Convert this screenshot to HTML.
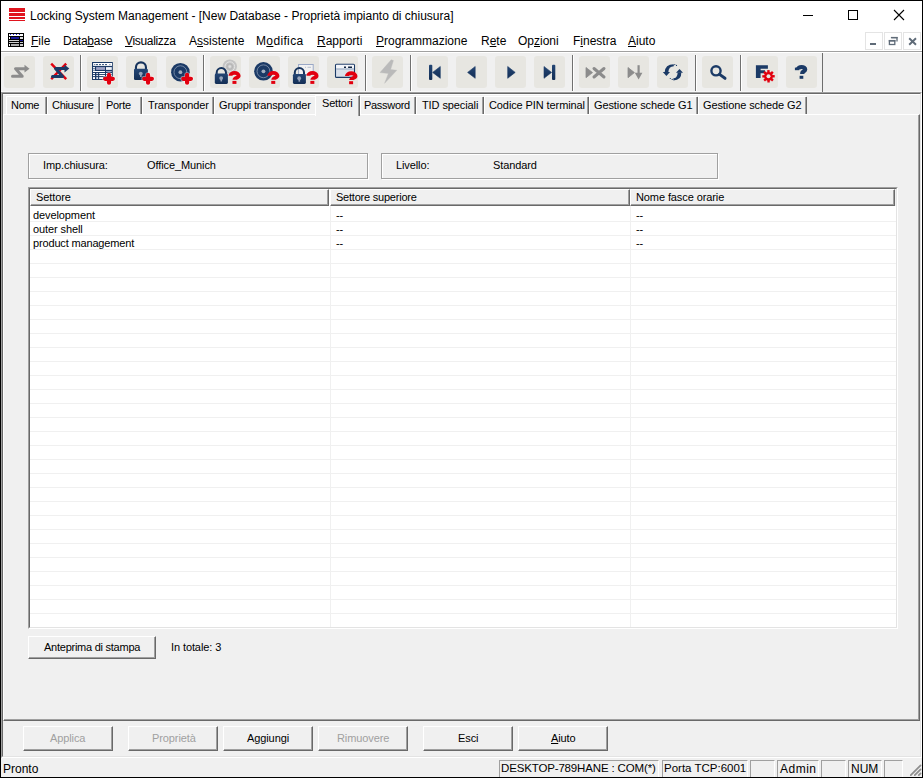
<!DOCTYPE html>
<html><head><meta charset="utf-8">
<style>
*{box-sizing:border-box}
html,body{margin:0;padding:0}
body{width:923px;height:778px;overflow:hidden;background:#f0f0f0;position:relative;font-family:"Liberation Sans",sans-serif;color:#000}
.a{position:absolute}
.tx{position:absolute;white-space:nowrap;line-height:1}
.f12{font-size:12px}
.ms{font-size:11px;letter-spacing:-0.1px}
.u{text-decoration:underline;text-underline-offset:1px}
.tb{position:absolute;top:56px;width:31px;height:32px;background:#e7e6e1;border-radius:3px}
.sep{position:absolute;top:55px;width:2px;height:36px;border-left:1px solid #707070;border-right:1px solid #fff}
.tab{position:absolute;top:96px;height:19px;border-left:1px solid #fff;border-top:1px solid #fff}
.tabr{position:absolute;top:97px;width:2px;height:17px;border-left:1px solid #a0a0a0;border-right:1px solid #696969}
.gb{position:absolute;border:1px solid #a0a0a0;box-shadow:inset 1px 1px 0 #fff,1px 1px 0 #fff}
.btn{position:absolute;background:#f0f0f0;border-top:1px solid #fff;border-left:1px solid #fff;border-right:1px solid #696969;border-bottom:1px solid #696969;box-shadow:inset -1px -1px 0 #a0a0a0}
.dis{color:#a0a0a0}
.pane{position:absolute;top:760px;height:17px;border-top:1px solid #a0a0a0;border-left:1px solid #a0a0a0;border-right:1px solid #fff}
</style></head><body>
<!-- window border -->
<div class="a" style="left:0;top:0;width:923px;height:778px;border:1px solid #000;"></div>
<!-- title bar -->
<div class="a" style="left:1px;top:1px;width:921px;height:50px;background:#fff"></div>
<!-- logo -->
<div class="a" style="left:9px;top:8px;width:16px;height:4px;background:#e0141e"></div>
<div class="a" style="left:9px;top:13px;width:16px;height:3px;background:#e0141e"></div>
<div class="a" style="left:9px;top:17px;width:16px;height:2px;background:#e0141e"></div>
<div class="a" style="left:9px;top:20px;width:16px;height:1px;background:#e0141e"></div>
<div class="tx f12" style="left:30px;top:10px">Locking System Management - [New Database - Proprietà impianto di chiusura]</div>
<!-- window controls -->
<div class="a" style="left:803px;top:15px;width:10px;height:1px;background:#000"></div>
<div class="a" style="left:848px;top:10px;width:10px;height:10px;border:1px solid #000"></div>
<svg class="a" style="left:893px;top:9px" width="12" height="12" viewBox="0 0 12 12"><path d="M1 1L11 11M11 1L1 11" stroke="#000" stroke-width="1.1"/></svg>

<!-- menu bar -->
<div id="menu">
<svg class="a" style="left:8px;top:33px" width="16" height="14" viewBox="0 0 16 14"><rect x="0" y="0" width="16" height="14" fill="#000"/><rect x="1" y="1" width="14" height="2" fill="#fff"/><rect x="2" y="1" width="1" height="1" fill="#22c"/><rect x="5" y="1" width="1" height="1" fill="#22c"/><rect x="8" y="1" width="1" height="1" fill="#22c"/><rect x="11" y="1" width="1" height="1" fill="#22c"/><rect x="1" y="4" width="1" height="2" fill="#fff"/><rect x="3" y="4" width="8" height="2" fill="#1a1a9a"/><rect x="12" y="4" width="3" height="2" fill="#ddd"/><rect x="1" y="7" width="10" height="1" fill="#ccc"/><rect x="12" y="7" width="3" height="1" fill="#1a1a9a"/><rect x="1" y="9" width="10" height="1" fill="#ccc"/><rect x="12" y="9" width="3" height="1" fill="#ccc"/><rect x="1" y="11" width="1" height="2" fill="#fff"/><rect x="3" y="11" width="8" height="2" fill="#aaa"/><rect x="12" y="11" width="3" height="2" fill="#ccc"/></svg>
<div class="tx f12" style="left:31px;top:35px"><span class="u">F</span>ile</div>
<div class="tx f12" style="left:63px;top:35px;letter-spacing:-0.25px">Data<span class="u">b</span>ase</div>
<div class="tx f12" style="left:125px;top:35px;letter-spacing:-0.33px"><span class="u">V</span>isualizza</div>
<div class="tx f12" style="left:189px;top:35px">A<span class="u">s</span>sistente</div>
<div class="tx f12" style="left:256px;top:35px;letter-spacing:0.35px">M<span class="u">o</span>difica</div>
<div class="tx f12" style="left:317px;top:35px"><span class="u">R</span>apporti</div>
<div class="tx f12" style="left:376px;top:35px"><span class="u">P</span>rogrammazione</div>
<div class="tx f12" style="left:481px;top:35px">R<span class="u">e</span>te</div>
<div class="tx f12" style="left:518px;top:35px">Op<span class="u">z</span>ioni</div>
<div class="tx f12" style="left:573px;top:35px">F<span class="u">i</span>nestra</div>
<div class="tx f12" style="left:628px;top:35px"><span class="u">A</span>iuto</div>
<!-- mdi buttons -->
<div class="a" style="left:865px;top:32px;width:18px;height:18px;border:1px solid #e4e4e4"></div>
<div class="a" style="left:884px;top:32px;width:18px;height:18px;border:1px solid #e4e4e4"></div>
<div class="a" style="left:903px;top:32px;width:18px;height:18px;border:1px solid #e4e4e4"></div>
<div class="a" style="left:870px;top:43px;width:6px;height:2px;background:#5f6b78"></div>
<svg class="a" style="left:886px;top:35px" width="14" height="12" viewBox="0 0 14 12"><path d="M5.5 2.7H11V6.5" fill="none" stroke="#5f6b78" stroke-width="1.3"/><rect x="3.4" y="5.6" width="5.4" height="3.9" fill="none" stroke="#5f6b78" stroke-width="1.3"/><rect x="2.8" y="5" width="6.6" height="1.6" fill="#5f6b78"/><rect x="4.9" y="1.9" width="6.7" height="1.4" fill="#5f6b78"/></svg>
<svg class="a" style="left:907px;top:36px" width="11" height="11" viewBox="0 0 11 11"><path d="M2.2 2.2L9 8.8M9 2.2L2.2 8.8" stroke="#5f6b78" stroke-width="1.9"/></svg>
</div>
<div class="a" style="left:1px;top:51px;width:921px;height:1px;background:#a0a0a0"></div>

<!-- toolbar -->
<div class="a" style="left:1px;top:52px;width:921px;height:40px;background:#f0f0f0;border-top:1px solid #fff;border-bottom:1px solid #f8f8f8"></div>
<div id="toolbar">
<div class="tb" style="left:4px"></div>
<div class="tb" style="left:43px"></div>
<div class="sep" style="left:80px"></div>
<div class="tb" style="left:87px"></div>
<div class="tb" style="left:126px"></div>
<div class="tb" style="left:166px"></div>
<div class="sep" style="left:203px"></div>
<div class="tb" style="left:210px"></div>
<div class="tb" style="left:249px"></div>
<div class="tb" style="left:288px"></div>
<div class="tb" style="left:327px"></div>
<div class="sep" style="left:365px"></div>
<div class="tb" style="left:372px"></div>
<div class="sep" style="left:410px"></div>
<div class="tb" style="left:417px"></div>
<div class="tb" style="left:456px"></div>
<div class="tb" style="left:495px"></div>
<div class="tb" style="left:534px"></div>
<div class="sep" style="left:572px"></div>
<div class="tb" style="left:579px"></div>
<div class="tb" style="left:618px"></div>
<div class="tb" style="left:657px"></div>
<div class="sep" style="left:695px"></div>
<div class="tb" style="left:702px"></div>
<div class="sep" style="left:740px"></div>
<div class="tb" style="left:747px"></div>
<div class="tb" style="left:786px"></div>
<div class="a" style="left:822px;top:53px;width:1px;height:39px;background:#6d6d6d"></div>
<svg class="a" style="left:0;top:0" width="923" height="95" viewBox="0 0 923 95">
<defs><linearGradient id="nv" x1="0" y1="0" x2="0" y2="1"><stop offset="0" stop-color="#244674"/><stop offset="1" stop-color="#132e55"/></linearGradient></defs>
<path d="M12.5 76.2H22.2L15.6 68.7H25" fill="none" stroke="#8c8c8c" stroke-width="3" stroke-linecap="round" stroke-linejoin="round"/>
<path d="M24.5 64.8L29.5 68.7L24.5 72.6Z" fill="#8c8c8c"/>
<path d="M51.2 63.6L66.2 79.2M66.2 63.6L51.2 79.2" stroke="#e2000f" stroke-width="2.4"/>
<path d="M52.5 76.5H62.5L55.5 68.6H65" fill="none" stroke="#1b3a66" stroke-width="3" stroke-linecap="round" stroke-linejoin="round"/>
<path d="M64.5 64.8L69.3 68.6L64.5 72.4Z" fill="#1b3a66"/>
<rect x="92" y="62" width="20.8" height="18" fill="#1b3a66"/><rect x="93.1" y="63" width="18.9" height="2.9" fill="#ffffff"/><rect x="93" y="67.1" width="2" height="1.3" fill="#ffffff"/><rect x="93" y="69.2" width="2" height="1.3" fill="#ffffff"/><rect x="96.1" y="67.1" width="8.9" height="2.8" fill="#9ea2c4"/><rect x="106" y="67.1" width="5.8" height="2.8" fill="#eef0f6"/><rect x="93" y="71" width="12" height="1" fill="#ffffff"/><rect x="106" y="71" width="5.8" height="1" fill="#9ea2c4"/><rect x="93" y="73" width="2" height="1.1" fill="#ffffff"/><rect x="96.3" y="73" width="1.8" height="1.1" fill="#dde2ec"/><rect x="99.2" y="73" width="5.8" height="1.1" fill="#ffffff"/><rect x="106" y="73" width="5.8" height="1.1" fill="#ffffff"/><rect x="93" y="75" width="2" height="1.1" fill="#ffffff"/><rect x="96.3" y="75" width="1.8" height="1.1" fill="#dde2ec"/><rect x="99.2" y="75" width="5.8" height="1.1" fill="#ffffff"/><rect x="106" y="75" width="5.8" height="1.1" fill="#ffffff"/><rect x="93" y="77.1" width="2" height="1.9" fill="#ffffff"/><rect x="96.3" y="77.1" width="1.8" height="1.9" fill="#dde2ec"/><rect x="99.2" y="77.1" width="3.9" height="1.9" fill="#ffffff"/>
<path d="M94.3 64.6H95.2M95.9 64.6H98M99 64.6H101M102 64.6H104M105 64.6H107M109.5 64.6H110.3" stroke="#1b3a66" stroke-width="0.9"/>
<path d="M109 74.95V82.64999999999999M105.15 78.8H112.85" stroke="#fff" stroke-width="5.6" stroke-linecap="round" opacity="0.5"/><path d="M109 74.95V82.64999999999999M105.15 78.8H112.85" stroke="#e2000f" stroke-width="4.2" stroke-linecap="round"/>
<path d="M135.95 69.30V67.35A5.00 5.00 0 0 1 145.95 67.35V69.30" fill="none" stroke="#16335c" stroke-width="2.1"/><rect x="134" y="68.8" width="13.90" height="11.20" rx="1.3" fill="url(#nv)"/><circle cx="140.75" cy="73.62" r="1.9" fill="#97a4ba"/><rect x="140.05" y="73.62" width="1.6" height="3.4" fill="#97a4ba"/>
<path d="M148.05 74.95V82.64999999999999M144.20000000000002 78.8H151.9" stroke="#fff" stroke-width="5.6" stroke-linecap="round" opacity="0.5"/><path d="M148.05 74.95V82.64999999999999M144.20000000000002 78.8H151.9" stroke="#e2000f" stroke-width="4.2" stroke-linecap="round"/>
<circle cx="180.4" cy="72.2" r="9.3" fill="#1b3a66"/><circle cx="180.4" cy="72.2" r="6.42" fill="none" stroke="#7d90aa" stroke-width="0.9"/><circle cx="180.4" cy="72.2" r="1.9" fill="#a3afc0"/>
<path d="M187.1 74.95V82.64999999999999M183.25 78.8H190.95" stroke="#fff" stroke-width="5.6" stroke-linecap="round" opacity="0.5"/><path d="M187.1 74.95V82.64999999999999M183.25 78.8H190.95" stroke="#e2000f" stroke-width="4.2" stroke-linecap="round"/>
<circle cx="229.8" cy="66.6" r="7.2" fill="#c4c4c4"/><circle cx="229.8" cy="66.6" r="4.8" fill="none" stroke="#e4e4e4" stroke-width="1"/><circle cx="229.8" cy="66.6" r="2.8" fill="none" stroke="#b0b0b0" stroke-width="0.8"/><circle cx="229.8" cy="66.6" r="1.3" fill="#e0e0e0"/>
<path d="M216.70 74.10V72.65A4.65 4.65 0 0 1 226.00 72.65V74.10" fill="none" stroke="#16335c" stroke-width="2"/><rect x="214.8" y="73.6" width="13.10" height="10.30" rx="1.3" fill="url(#nv)"/><circle cx="221.15" cy="78.03" r="1.9" fill="#97a4ba"/><rect x="220.45" y="78.03" width="1.6" height="3.4" fill="#97a4ba"/>
<path d="M230.45 75.80A4.1 2.9 0 0 1 238.65 75.80C238.65 78.00 234.45 77.40 234.45 79.80" fill="none" stroke="#e2000f" stroke-width="3.9"/><rect x="232.45" y="80.90" width="4" height="3" fill="#e2000f"/>
<circle cx="263.45" cy="71.3" r="9.3" fill="#1b3a66"/><circle cx="263.45" cy="71.3" r="6.42" fill="none" stroke="#7d90aa" stroke-width="0.9"/><circle cx="263.45" cy="71.3" r="1.9" fill="#a3afc0"/>
<path d="M269.25 75.80A4.1 2.9 0 0 1 277.45 75.80C277.45 78.00 273.25 77.40 273.25 79.80" fill="none" stroke="#e2000f" stroke-width="3.9"/><rect x="271.25" y="80.90" width="4" height="3" fill="#e2000f"/>
<rect x="298.6" y="64.5" width="14.6" height="10" fill="#f2f2f2" stroke="#9aa8c6" stroke-width="1"/><path d="M305 67.3H306M307.5 67.3H311" stroke="#b0b8c8" stroke-width="0.9"/>
<path d="M294.80 74.50V72.60A4.60 4.60 0 0 1 304.00 72.60V74.50" fill="none" stroke="#16335c" stroke-width="2"/><rect x="292.9" y="74" width="13.00" height="9.90" rx="1.3" fill="url(#nv)"/><circle cx="299.20" cy="78.26" r="1.9" fill="#97a4ba"/><rect x="298.50" y="78.26" width="1.6" height="3.4" fill="#97a4ba"/>
<path d="M308.35 75.80A4.1 2.9 0 0 1 316.55 75.80C316.55 78.00 312.35 77.40 312.35 79.80" fill="none" stroke="#e2000f" stroke-width="3.9"/><rect x="310.35" y="80.90" width="4" height="3" fill="#e2000f"/>
<rect x="335.5" y="64.3" width="19" height="13.1" rx="1" fill="#d9e0ea" stroke="#1b3a66" stroke-width="1.1"/>
<rect x="336.1" y="64.9" width="17.8" height="3.3" fill="#f4f6fa"/>
<rect x="336.1" y="68.2" width="17.8" height="1.8" fill="#b6c2d3"/>
<path d="M344 67.25H346M348.1 67.25H352" stroke="#0e2240" stroke-width="1.5"/>
<path d="M346.90 76.10A4.3 2.9 0 0 1 355.50 76.10C355.50 78.30 351.10 77.70 351.10 80.10" fill="none" stroke="#e2000f" stroke-width="3.9"/><rect x="349.10" y="81.20" width="4" height="3" fill="#e2000f"/>
<path d="M391.2 59.8L393.4 60.6L390.6 69.6L396.8 70.3L384.6 83.3L388.4 73.4L380 72.6Z" fill="#bababa" stroke="#bababa" stroke-width="0.4" stroke-linejoin="round"/>
<rect x="429" y="64.8" width="3.3" height="15.2" rx="1" fill="url(#nv)"/>
<path d="M440.3 66.5V78.3L432.6 72.4Z" fill="url(#nv)" stroke="#1b3a66" stroke-width="0.6" stroke-linejoin="round"/>
<path d="M475.2 66.5V78.3L467.6 72.4Z" fill="url(#nv)" stroke="#1b3a66" stroke-width="0.6" stroke-linejoin="round"/>
<path d="M507.7 66.5V78.3L515.2 72.4Z" fill="url(#nv)" stroke="#1b3a66" stroke-width="0.6" stroke-linejoin="round"/>
<path d="M544 66.5V78.3L551.6 72.4Z" fill="url(#nv)" stroke="#1b3a66" stroke-width="0.6" stroke-linejoin="round"/>
<rect x="552" y="64.8" width="3.3" height="15.2" rx="1" fill="url(#nv)"/>
<path d="M586 67.5V77.7L592.5 72.6Z" fill="#8c8c8c" stroke="#8c8c8c" stroke-width="0.8" stroke-linejoin="round"/>
<path d="M594 68.5L604 77M604 68.5L594 77" stroke="#8c8c8c" stroke-width="3" stroke-linecap="round"/>
<path d="M628 67.5V77.7L634.4 72.6Z" fill="#8c8c8c" stroke="#8c8c8c" stroke-width="0.8" stroke-linejoin="round"/>
<path d="M638.6 65.2V76" stroke="#8c8c8c" stroke-width="2.2"/>
<path d="M634.8 72.8H642.4L638.6 79.6Z" fill="#8c8c8c"/>
<path d="M673.8 64.2Q665 64.2 664.7 72.3H668.3Q668.6 66.4 673.8 66.3Z" fill="#1b3a66"/>
<path d="M662.8 72H670L666.4 75.9Z" fill="#1b3a66"/>
<path d="M673.4 80.4Q681.6 80.3 681.3 72.5H677.7Q677.4 78.2 673.4 78.3Z" fill="#1b3a66"/>
<path d="M676 72.8H683L679.5 69Z" fill="#1b3a66"/>
<circle cx="674.8" cy="64.6" r="0.6" fill="#1b3a66"/><circle cx="676.5" cy="65.4" r="0.6" fill="#1b3a66"/>
<circle cx="670.3" cy="78.5" r="0.6" fill="#1b3a66"/><circle cx="672.2" cy="79.4" r="0.6" fill="#1b3a66"/>
<circle cx="716" cy="70.8" r="4.6" fill="none" stroke="#1b3a66" stroke-width="2.4"/><path d="M719.6 74.4L725 78.3" stroke="#1b3a66" stroke-width="3" stroke-linecap="round"/>
<path d="M755.9 65.2H767.9V68.7H760.6V70.3H765V73.3H760.6V78.1H755.9Z" fill="#1b3a66"/>
<g transform="translate(768.5 76.3)"><circle r="4.4" fill="#e2000f"/><rect x="-1.25" y="-6.2" width="2.4" height="2.8" transform="rotate(0)" fill="#e2000f"/><rect x="-1.25" y="-6.2" width="2.4" height="2.8" transform="rotate(45)" fill="#e2000f"/><rect x="-1.25" y="-6.2" width="2.4" height="2.8" transform="rotate(90)" fill="#e2000f"/><rect x="-1.25" y="-6.2" width="2.4" height="2.8" transform="rotate(135)" fill="#e2000f"/><rect x="-1.25" y="-6.2" width="2.4" height="2.8" transform="rotate(180)" fill="#e2000f"/><rect x="-1.25" y="-6.2" width="2.4" height="2.8" transform="rotate(225)" fill="#e2000f"/><rect x="-1.25" y="-6.2" width="2.4" height="2.8" transform="rotate(270)" fill="#e2000f"/><rect x="-1.25" y="-6.2" width="2.4" height="2.8" transform="rotate(315)" fill="#e2000f"/><circle r="2" fill="#e7e6e1"/></g>
<path d="M798 69.6A3.6 2.6 0 0 1 805.2 69.6C805.2 71.4 802.25 71.2 802.25 73V74.1" fill="none" stroke="#1b3a66" stroke-width="4.2"/><rect x="794.9" y="67.6" width="4.3" height="2.6" fill="#1b3a66"/><rect x="799.6" y="75.8" width="3.7" height="3" fill="#1b3a66"/>
</svg>

</div>

<!-- MDI client edge -->
<div class="a" style="left:1px;top:92px;width:921px;height:666px;border-top:1px solid #a0a0a0;border-left:1px solid #a0a0a0;border-right:1px solid #fff;border-bottom:1px solid #fff"></div>
<div class="a" style="left:2px;top:93px;width:919px;height:664px;border-top:1px solid #696969;border-left:1px solid #696969;border-right:1px solid #e3e3e3;border-bottom:1px solid #e3e3e3"></div>

<!-- tab control -->
<div class="a" style="left:3px;top:94px;width:917px;height:1px;background:#fff"></div>
<div id="tabs">
<div class="tab" style="left:6px;width:40px"></div><div class="tabr" style="left:45px"></div>
<div class="tab" style="left:47px;width:52px"></div><div class="tabr" style="left:98px"></div>
<div class="tab" style="left:100px;width:41px"></div><div class="tabr" style="left:140px"></div>
<div class="tab" style="left:142px;width:71px"></div><div class="tabr" style="left:212px"></div>
<div class="tab" style="left:214px;width:101px"></div>
<div class="tab" style="left:360px;width:55px"></div><div class="tabr" style="left:414px"></div>
<div class="tab" style="left:416px;width:67px"></div><div class="tabr" style="left:482px"></div>
<div class="tab" style="left:484px;width:104px"></div><div class="tabr" style="left:587px"></div>
<div class="tab" style="left:589px;width:108px"></div><div class="tabr" style="left:696px"></div>
<div class="tab" style="left:698px;width:108px"></div><div class="tabr" style="left:805px"></div>
<div class="tx ms" style="left:11px;top:100px;letter-spacing:-0.3px">Nome</div>
<div class="tx ms" style="left:52px;top:100px;letter-spacing:-0.3px">Chiusure</div>
<div class="tx ms" style="left:106px;top:100px;letter-spacing:-0.3px">Porte</div>
<div class="tx ms" style="left:148px;top:100px">Transponder</div>
<div class="tx ms" style="left:219px;top:100px;letter-spacing:-0.17px">Gruppi transponder</div>
<div class="tx ms" style="left:364px;top:100px;letter-spacing:-0.3px">Password</div>
<div class="tx ms" style="left:422px;top:100px">TID speciali</div>
<div class="tx ms" style="left:489px;top:100px">Codice PIN terminal</div>
<div class="tx ms" style="left:594px;top:100px">Gestione schede G1</div>
<div class="tx ms" style="left:703px;top:100px">Gestione schede G2</div>
</div>
<!-- panel -->
<div class="a" style="left:3px;top:114px;width:917px;height:607px;border-top:1px solid #fff;border-left:1px solid #fff;border-right:1px solid #696969;border-bottom:1px solid #696969;box-shadow:inset -1px -1px 0 #a0a0a0"></div>
<!-- selected tab -->
<div class="a" style="left:315px;top:95px;width:45px;height:21px;background:#f0f0f0;border-left:1px solid #fff;border-top:1px solid #fff;border-right:1px solid #696969;box-shadow:inset -1px 0 0 #a0a0a0"></div>
<div class="tx ms" style="left:322px;top:98px;letter-spacing:-0.2px">Settori</div>

<!-- group boxes -->
<div class="gb" style="left:28px;top:153px;width:340px;height:26px"></div>
<div class="tx ms" style="left:43px;top:160px">Imp.chiusura:</div>
<div class="tx ms" style="left:147px;top:160px">Office_Munich</div>
<div class="gb" style="left:381px;top:153px;width:337px;height:26px"></div>
<div class="tx ms" style="left:396px;top:160px">Livello:</div>
<div class="tx ms" style="left:493px;top:160px">Standard</div>

<!-- list view -->
<div id="list">
<div class="a" style="left:28px;top:187px;width:870px;height:442px;background:#fff;border-top:1px solid #a0a0a0;border-left:1px solid #a0a0a0;border-right:1px solid #fff;border-bottom:1px solid #fff"></div>
<div class="a" style="left:29px;top:188px;width:868px;height:440px;border-top:1px solid #696969;border-left:1px solid #696969;border-right:1px solid #e3e3e3;border-bottom:1px solid #e3e3e3"></div>
<div class="a" style="left:30px;top:221px;width:866px;height:406px;background:repeating-linear-gradient(to bottom,#f0f0f0 0,#f0f0f0 1px,transparent 1px,transparent 14px)"></div>
<div class="a" style="left:330px;top:206px;width:1px;height:421px;background:#f0f0f0"></div>
<div class="a" style="left:630px;top:206px;width:1px;height:421px;background:#f0f0f0"></div>
<div class="a" style="left:30px;top:189px;width:299px;height:17px;background:#f0f0f0;border-top:1px solid #fff;border-left:1px solid #fff;border-right:1px solid #696969;border-bottom:1px solid #696969;box-shadow:inset -1px -1px 0 #a0a0a0"></div>
<div class="a" style="left:330px;top:189px;width:300px;height:17px;background:#f0f0f0;border-top:1px solid #fff;border-left:1px solid #fff;border-right:1px solid #696969;border-bottom:1px solid #696969;box-shadow:inset -1px -1px 0 #a0a0a0"></div>
<div class="a" style="left:630px;top:189px;width:265px;height:17px;background:#f0f0f0;border-top:1px solid #fff;border-left:1px solid #fff;border-right:1px solid #696969;border-bottom:1px solid #696969;box-shadow:inset -1px -1px 0 #a0a0a0"></div>
<div class="a" style="left:895px;top:189px;width:1px;height:17px;background:#f0f0f0"></div>
<div class="tx ms" style="left:36px;top:192px">Settore</div>
<div class="tx ms" style="left:336px;top:192px;letter-spacing:-0.22px">Settore superiore</div>
<div class="tx ms" style="left:636px;top:192px">Nome fasce orarie</div>
<div class="tx ms" style="left:33px;top:210px">development</div>
<div class="tx ms" style="left:33px;top:224px">outer shell</div>
<div class="tx ms" style="left:33px;top:238px;letter-spacing:-0.16px">product management</div>
<div class="tx ms" style="left:336px;top:210px">--</div>
<div class="tx ms" style="left:336px;top:224px">--</div>
<div class="tx ms" style="left:336px;top:238px">--</div>
<div class="tx ms" style="left:636px;top:210px">--</div>
<div class="tx ms" style="left:636px;top:224px">--</div>
<div class="tx ms" style="left:636px;top:238px">--</div>
</div>

<!-- print preview button -->
<div class="btn" style="left:28px;top:636px;width:128px;height:23px"></div>
<div class="tx ms" style="left:44px;top:642px;letter-spacing:-0.25px">Anteprima di stampa</div>
<div class="tx ms" style="left:171px;top:642px">In totale: 3</div>

<!-- bottom buttons -->
<div class="btn" style="left:23px;top:726px;width:90px;height:25px"></div>
<div class="tx ms dis" style="left:50px;top:733px">Applica</div>
<div class="btn" style="left:128px;top:726px;width:90px;height:25px"></div>
<div class="tx ms dis" style="left:152px;top:733px">Proprietà</div>
<div class="btn" style="left:223px;top:726px;width:90px;height:25px"></div>
<div class="tx ms" style="left:247px;top:733px">Aggiungi</div>
<div class="btn" style="left:318px;top:726px;width:90px;height:25px"></div>
<div class="tx ms dis" style="left:337px;top:733px">Rimuovere</div>
<div class="btn" style="left:423px;top:726px;width:90px;height:25px"></div>
<div class="tx ms" style="left:458px;top:733px">Esci</div>
<div class="btn" style="left:518px;top:726px;width:90px;height:25px"></div>
<div class="tx ms" style="left:551px;top:733px"><span class="u">A</span>iuto</div>

<!-- status bar -->
<div class="a" style="left:1px;top:758px;width:921px;height:19px;background:#f0f0f0"></div>
<div class="tx" style="left:3px;top:763px;font-size:12px">Pronto</div>
<div class="pane" style="left:499px;width:160px"></div>
<div class="tx" style="left:501px;top:763px;font-size:11.5px;letter-spacing:-0.15px">DESKTOP-789HANE : COM(*)</div>
<div class="pane" style="left:662px;width:86px"></div>
<div class="tx" style="left:664px;top:763px;font-size:11.5px">Porta TCP:6001</div>
<div class="pane" style="left:750px;width:25px"></div>
<div class="pane" style="left:777px;width:42px"></div>
<div class="tx" style="left:780px;top:763px;font-size:12px;letter-spacing:0.5px">Admin</div>
<div class="pane" style="left:821px;width:25px"></div>
<div class="pane" style="left:848px;width:34px"></div>
<div class="tx" style="left:851px;top:763px;font-size:12px">NUM</div>
<div class="pane" style="left:884px;width:19px"></div>
<svg class="a" style="left:907px;top:761px" width="15" height="16" viewBox="0 0 15 16"><path d="M13.6 4.3L3.8 14.2M13.6 8.3L7.8 14.2M13.6 12.4L11.8 14.2" stroke="#8e8e8e" stroke-width="1.7" stroke-linecap="round"/></svg>
</body></html>
